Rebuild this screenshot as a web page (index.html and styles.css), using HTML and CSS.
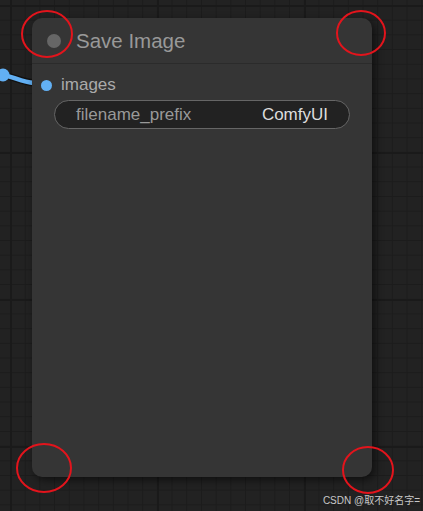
FILE: index.html
```html
<!DOCTYPE html>
<html>
<head>
<meta charset="utf-8">
<link rel="stylesheet" href="styles.css">
</head>
<body>
<div class="canvas">
  <svg class="link" width="40" height="100" viewBox="0 0 40 100">
    <path d="M3 75 C 14 77, 22 82, 34 83" stroke="#111" stroke-width="7" fill="none"/>
    <path d="M3 75 C 14 77, 22 82, 34 83" stroke="#62b0f4" stroke-width="4.5" fill="none"/>
    <circle cx="3" cy="75" r="6.5" fill="#62b0f4"/>
  </svg>
  <div class="node">
    <div class="node-title">
      <span class="title-dot"></span>
      <span class="title-text">Save Image</span>
    </div>
    <div class="node-body">
      <div class="slot">
        <span class="slot-dot"></span>
        <span class="slot-label">images</span>
      </div>
      <div class="widget">
        <span class="widget-name">filename_prefix</span>
        <span class="widget-value">ComfyUI</span>
      </div>
    </div>
  </div>
  <svg class="marks" width="423" height="511" viewBox="0 0 423 511">
    <ellipse cx="47" cy="34" rx="25" ry="23" fill="none" stroke="#e3141c" stroke-width="2"/>
    <ellipse cx="361" cy="33" rx="24" ry="22" fill="none" stroke="#e3141c" stroke-width="2"/>
    <ellipse cx="44" cy="468" rx="27" ry="24" fill="none" stroke="#e3141c" stroke-width="2"/>
    <ellipse cx="368" cy="470" rx="25" ry="23" fill="none" stroke="#e3141c" stroke-width="2"/>
  </svg>
  <div class="watermark">CSDN @取不好名字=</div>
</div>
</body>
</html>
```
FILE: styles.css
```css
html, body {
  margin: 0;
  padding: 0;
  width: 423px;
  height: 511px;
  overflow: hidden;
}
.canvas {
  position: relative;
  width: 423px;
  height: 511px;
  background-color: #222222;
  background-image:
    linear-gradient(to right, #1a1a1a 0, #1a1a1a 2px, transparent 2px),
    linear-gradient(to bottom, #1a1a1a 0, #1a1a1a 2px, transparent 2px),
    linear-gradient(to right, #1c1c1c 0, #1c1c1c 1px, transparent 1px),
    linear-gradient(to bottom, #1c1c1c 0, #1c1c1c 1px, transparent 1px);
  background-size: 147px 147px, 147px 147px, 14.7px 14.7px, 14.7px 14.7px;
  background-position: 10px 5px, 10px 5px, 10px 5px, 10px 5px;
  font-family: Arial, "Liberation Sans", sans-serif;
  padding: 18px 0 0 32px;
  box-sizing: border-box;
}
.link {
  position: absolute;
  left: 0;
  top: 0;
}
.node {
  position: relative;
  width: 340px;
  height: 459px;
  background: #353535;
  border-radius: 10px;
  box-shadow: 3px 3px 8px rgba(0,0,0,0.55);
  display: flex;
  flex-direction: column;
}
.node-title {
  height: 45px;
  border-bottom: 1px solid #2b2b2b;
  display: flex;
  align-items: center;
  padding-left: 15px;
  gap: 15px;
}
.title-dot {
  width: 14px;
  height: 14px;
  border-radius: 50%;
  background: #666666;
}
.title-text {
  color: #999999;
  font-size: 20.5px;
  padding-top: 1px;
}
.node-body {
  padding: 9px 22px 0 9px;
  display: flex;
  flex-direction: column;
}
.slot {
  display: flex;
  align-items: center;
  height: 24px;
  gap: 9px;
}
.slot-dot {
  width: 11px;
  height: 11px;
  border-radius: 50%;
  background: #62b0f4;
}
.slot-label {
  color: #aaaaaa;
  font-size: 17px;
}
.widget {
  margin: 3px 0 0 13px;
  height: 27px;
  border: 1px solid #666666;
  border-radius: 15px;
  background: #222222;
  display: flex;
  align-items: center;
  justify-content: space-between;
  padding: 0 21px 0 21px;
  font-size: 17px;
}
.widget-name {
  color: #999999;
}
.widget-value {
  color: #dddddd;
}
.marks {
  position: absolute;
  left: 0;
  top: 0;
  pointer-events: none;
}
.watermark {
  position: absolute;
  right: 3px;
  top: 492px;
  font-size: 10px;
  color: #c8c8c8;
  font-family: Arial, "Liberation Sans", "Noto Sans CJK SC", sans-serif;
}
```
